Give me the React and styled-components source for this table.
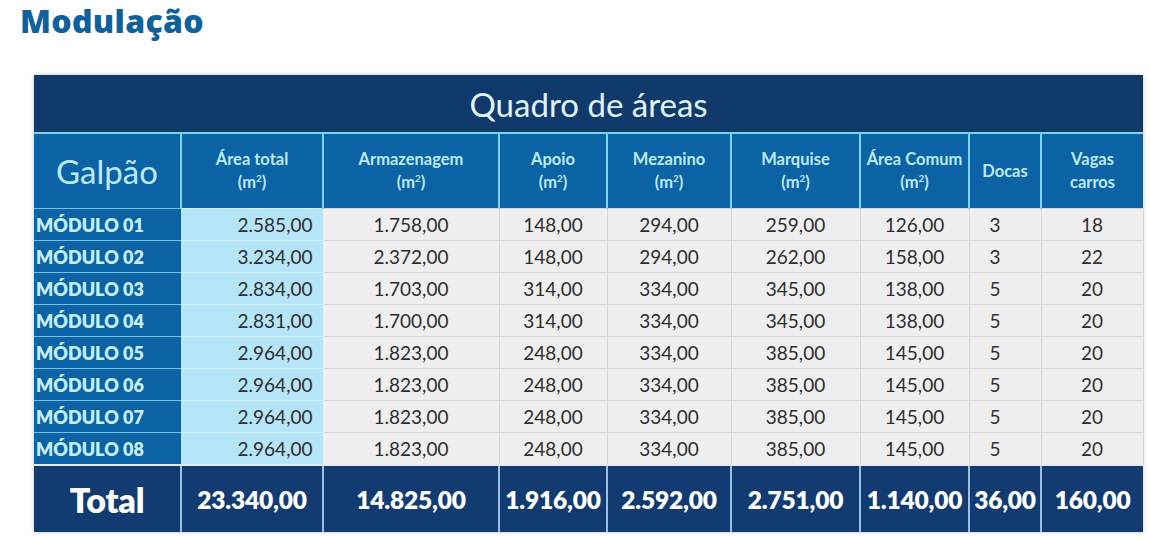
import React from "react";
import styled, { createGlobalStyle } from "styled-components";

const Global = createGlobalStyle`
  html, body { margin: 0; padding: 0; background: #ffffff; }
  body { font-family: "Lato", "Open Sans", sans-serif; }
`;

const Page = styled.div`
  width: 1150px;
  height: 549px;
  box-sizing: border-box;
  padding: 0 0 0 20px;
  overflow: hidden;
`;

const Heading = styled.h2`
  margin: 0;
  padding-top: 1px;
  height: 74px;
  font-family: "Open Sans", sans-serif;
  font-weight: 800;
  font-size: 32px;
  line-height: 40px;
  color: #10609c;
  letter-spacing: 0.3px;
`;

const Frame = styled.div`
  margin-left: 14px;
  width: 1109px;
  box-shadow: 0 0 4px rgba(0, 0, 0, 0.25);
`;

const Table = styled.table`
  width: 1109px;
  border-collapse: collapse;
  table-layout: fixed;
  font-family: "Lato", sans-serif;
`;

const TitleCell = styled.th`
  height: 57px;
  padding: 0;
  background: #103a6c;
  color: #e2f4fb;
  font-weight: 400;
  font-size: 33px;
  text-align: center;
  border-bottom: 2px solid #7fd2f0;
`;

const HeadCell = styled.th`
  height: 74px;
  padding: 0 1px;
  background: #0b62a4;
  color: #bdeafa;
  font-size: ${(p) => (p.$big ? "33px" : "16.5px")};
  font-weight: ${(p) => (p.$big ? 400 : 700)};
  line-height: 23px;
  text-align: center;
  white-space: nowrap;
  border-left: 2px solid #7fd2f0;
  border-right: 2px solid #7fd2f0;
  &:first-child { border-left: none; }
  &:last-child { border-right: none; }
`;

const Sup = styled.sup`
  font-size: 10px;
  vertical-align: 6px;
  line-height: 0;
`;

const LabelCell = styled.td`
  height: 31px;
  padding: 0 0 0 2px;
  background: #0b62a4;
  color: #c6eefb;
  font-weight: 800;
  font-size: 18px;
  text-align: left;
  border-top: 1px solid #74c4e6;
  white-space: nowrap;
`;

const DataCell = styled.td`
  height: 31px;
  padding: ${(p) =>
    p.$align === "right" ? "0 10px 0 0" : p.$align === "docas" ? "0 0 0 20px" : "0"};
  background: ${(p) => (p.$accent ? "#b4e5f8" : "#efefef")};
  color: #2e2e2e;
  font-size: 19px;
  text-align: ${(p) => (p.$align === "right" ? "right" : p.$align === "docas" ? "left" : "center")};
  border: 1px solid ${(p) => (p.$accent ? "#d6f2fc" : "#d6d6d6")};
  border-left-color: ${(p) => (p.$accent ? "#b4e5f8" : "#d6d6d6")};
  white-space: nowrap;
`;

const TotalCell = styled.td`
  height: 66px;
  padding: 0;
  background: #113b71;
  color: #ffffff;
  font-weight: 800;
  font-size: ${(p) => (p.$big ? "34px" : "24.5px")};
  text-align: center;
  border-left: 2px solid #9dc0e0;
  border-top: 2px solid #e5eef6;
  white-space: nowrap;
  letter-spacing: -0.2px;
  &:first-child { border-left: none; }
`;

const widths = [147, 142, 176, 108, 124, 129, 109, 72, 102];

const headers = [
  { label: "Área total", unit: true },
  { label: "Armazenagem", unit: true },
  { label: "Apoio", unit: true },
  { label: "Mezanino", unit: true },
  { label: "Marquise", unit: true },
  { label: "Área Comum", unit: true },
  { label: "Docas", unit: false },
  { label: "Vagas", sub: "carros" },
];

const rows = [
  ["MÓDULO 01", "2.585,00", "1.758,00", "148,00", "294,00", "259,00", "126,00", "3", "18"],
  ["MÓDULO 02", "3.234,00", "2.372,00", "148,00", "294,00", "262,00", "158,00", "3", "22"],
  ["MÓDULO 03", "2.834,00", "1.703,00", "314,00", "334,00", "345,00", "138,00", "5", "20"],
  ["MÓDULO 04", "2.831,00", "1.700,00", "314,00", "334,00", "345,00", "138,00", "5", "20"],
  ["MÓDULO 05", "2.964,00", "1.823,00", "248,00", "334,00", "385,00", "145,00", "5", "20"],
  ["MÓDULO 06", "2.964,00", "1.823,00", "248,00", "334,00", "385,00", "145,00", "5", "20"],
  ["MÓDULO 07", "2.964,00", "1.823,00", "248,00", "334,00", "385,00", "145,00", "5", "20"],
  ["MÓDULO 08", "2.964,00", "1.823,00", "248,00", "334,00", "385,00", "145,00", "5", "20"],
];

const totals = ["23.340,00", "14.825,00", "1.916,00", "2.592,00", "2.751,00", "1.140,00", "36,00", "160,00"];

export default function App() {
  return (
    <>
      <Global />
      <Page>
        <Heading>Modulação</Heading>
        <Frame>
          <Table>
            <colgroup>
              {widths.map((w, i) => (
                <col key={i} style={{ width: w }} />
              ))}
            </colgroup>
            <thead>
              <tr>
                <TitleCell colSpan={9}>Quadro de áreas</TitleCell>
              </tr>
              <tr>
                <HeadCell $big>Galpão</HeadCell>
                {headers.map((h) => (
                  <HeadCell key={h.label}>
                    {h.label}
                    {h.unit && (
                      <>
                        <br />
                        (m<Sup>2</Sup>)
                      </>
                    )}
                    {h.sub && (
                      <>
                        <br />
                        {h.sub}
                      </>
                    )}
                  </HeadCell>
                ))}
              </tr>
            </thead>
            <tbody>
              {rows.map((r) => (
                <tr key={r[0]}>
                  <LabelCell>{r[0]}</LabelCell>
                  {r.slice(1).map((v, i) => (
                    <DataCell
                      key={i}
                      $accent={i === 0}
                      $align={i === 0 ? "right" : i === 6 ? "docas" : "center"}
                    >
                      {v}
                    </DataCell>
                  ))}
                </tr>
              ))}
              <tr>
                <TotalCell $big>Total</TotalCell>
                {totals.map((t, i) => (
                  <TotalCell key={i}>{t}</TotalCell>
                ))}
              </tr>
            </tbody>
          </Table>
        </Frame>
      </Page>
    </>
  );
}
